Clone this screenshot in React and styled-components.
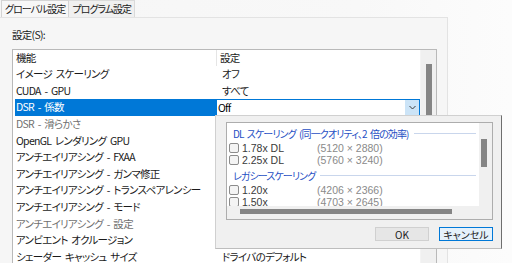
import React from "react";
import styled, { createGlobalStyle, css } from "styled-components";

const GlobalStyle = createGlobalStyle`
  html, body {
    margin: 0;
    padding: 0;
  }
  body {
    width: 512px;
    height: 263px;
    overflow: hidden;
    background: #f8f8f8;
    color: #1a1a1a;
    font-family: "Noto Sans CJK JP", "Noto Sans", sans-serif;
    font-size: 10.5px;
    letter-spacing: -0.7px;
    word-spacing: 2px;
    font-feature-settings: "palt";
  }
`;

const features = [
  { name: "イメージ スケーリング", value: "オフ" },
  { name: "CUDA - GPU", value: "すべて" },
  { name: "DSR - 係数", value: "Off", selected: true },
  { name: "DSR - 滑らかさ", disabled: true },
  { name: "OpenGL レンダリング GPU" },
  { name: "アンチエイリアシング - FXAA" },
  { name: "アンチエイリアシング - ガンマ修正" },
  { name: "アンチエイリアシング - トランスペアレンシー" },
  { name: "アンチエイリアシング - モード" },
  { name: "アンチエイリアシング - 設定", disabled: true },
  { name: "アンビエント オクルージョン" },
  { name: "シェーダー キャッシュ サイズ", value: "ドライバのデフォルト" },
];

const groups = [
  {
    title: "DL スケーリング (同一クオリティ、2 倍の効率)",
    items: [
      { label: "1.78x DL", res: "(5120 × 2880)" },
      { label: "2.25x DL", res: "(5760 × 3240)" },
    ],
  },
  {
    title: "レガシースケーリング",
    items: [
      { label: "1.20x", res: "(4206 × 2366)" },
      { label: "1.50x", res: "(4703 × 2645)" },
    ],
  },
];

export default function App() {
  return (
    <>
      <GlobalStyle />
      <Page>
        <TabStrip>
          <Tab active>グローバル設定</Tab>
          <Tab>プログラム設定</Tab>
        </TabStrip>
        <Panel>
          <Label>設定(S):</Label>
          <ListBox>
            <Table>
              <HeaderRow>
                <HeaderCell>機能</HeaderCell>
                <HeaderCell divider>設定</HeaderCell>
              </HeaderRow>
              {features.map((f) => (
                <Row key={f.name}>
                  <NameCell selected={f.selected} disabled={f.disabled}>
                    {f.name}
                  </NameCell>
                  {f.selected ? (
                    <Combo>
                      <ComboText>{f.value}</ComboText>
                      <ComboButton>
                        <svg width="7" height="5" viewBox="0 0 7 5">
                          <path
                            d="M0.5 1 L3.5 4 L6.5 1"
                            fill="none"
                            stroke="#3c3c3c"
                            strokeWidth="1"
                          />
                        </svg>
                      </ComboButton>
                    </Combo>
                  ) : (
                    <ValueCell>{f.value}</ValueCell>
                  )}
                </Row>
              ))}
            </Table>
            <VScroll>
              <VThumb />
            </VScroll>
          </ListBox>
        </Panel>
        <Popup>
          <ScaleBox>
            <ScaleList>
              {groups.map((g) => (
                <Group key={g.title}>
                  <GroupTitle>
                    <span>{g.title}</span>
                    <GroupLine />
                  </GroupTitle>
                  {g.items.map((it) => (
                    <Item key={it.label}>
                      <Check />
                      <ItemLabel>{it.label}</ItemLabel>
                      <ItemRes>{it.res}</ItemRes>
                    </Item>
                  ))}
                </Group>
              ))}
            </ScaleList>
            <InnerVScroll>
              <InnerVThumb />
            </InnerVScroll>
            <InnerHScroll>
              <InnerHThumb />
            </InnerHScroll>
            <Corner />
          </ScaleBox>
          <Buttons>
            <Button>OK</Button>
            <Button primary>キャンセル</Button>
          </Buttons>
        </Popup>
      </Page>
    </>
  );
}

const Page = styled.div`
  position: relative;
  width: 512px;
  height: 263px;
  overflow: hidden;
  background: linear-gradient(90deg, #f6f6f6 0%, #f8f8f8 70%, #fcfcfc 100%);
`;

const TabStrip = styled.div`
  display: flex;
  height: 17px;
  padding-left: 1px;
  align-items: flex-end;
`;

const Tab = styled.div`
  height: 17px;
  line-height: 16px;
  padding: 0 3px;
  box-sizing: border-box;
  border: 1px solid #dadada;
  border-bottom: none;
  background: #f0f0f0;
  color: #1a1a1a;
  font-size: 10px;
  letter-spacing: -1px;
  ${({ active }) =>
    active &&
    css`
      background: #f7f7f7;
      border-color: #d4d4d4;
    `}
  & + & {
    border-left: none;
  }
`;

const Panel = styled.div`
  width: 448px;
  height: 246px;
  box-sizing: border-box;
  border-top: 1px solid #e3e3e3;
  border-right: 1px solid #e3e3e3;
  background: #f6f6f6;
  padding: 9px 0 0 12px;
  display: flex;
  flex-direction: column;
`;

const Label = styled.div`
  height: 15px;
  line-height: 15px;
  margin-bottom: 7px;
`;

const ListBox = styled.div`
  display: flex;
  width: 425px;
  height: 230px;
  box-sizing: border-box;
  border: 1px solid #b9b9b9;
  background: #ffffff;
`;

const Table = styled.div`
  flex: 1;
  display: flex;
  flex-direction: column;
`;

const HeaderRow = styled.div`
  display: grid;
  grid-template-columns: 203px 1fr;
  height: 16px;
  flex-shrink: 0;
`;

const HeaderCell = styled.div`
  line-height: 16px;
  padding-left: 3px;
  color: #1a1a1a;
  ${({ divider }) =>
    divider &&
    css`
      border-left: 1px solid #e5e5e5;
      padding-left: 3px;
    `}
`;

const Row = styled.div`
  display: grid;
  grid-template-columns: 203px 1fr;
  height: 16.65px;
  flex-shrink: 0;
`;

const NameCell = styled.div`
  margin-left: 2px;
  padding-left: 1px;
  line-height: 16.65px;
  white-space: nowrap;
  color: ${({ disabled }) => (disabled ? "#707070" : "#1a1a1a")};
  ${({ selected }) =>
    selected &&
    css`
      background: #0078d7;
      color: #ffffff;
    `}
`;

const ValueCell = styled.div`
  padding-left: 6px;
  line-height: 16.65px;
  white-space: nowrap;
`;

const Combo = styled.div`
  display: flex;
  box-sizing: border-box;
  border: 1px solid #0078d7;
  background: #ffffff;
  height: 17px;
`;

const ComboText = styled.div`
  flex: 1;
  padding-left: 1px;
  line-height: 15px;
  color: #000;
`;

const ComboButton = styled.div`
  width: 14px;
  background: #cce4f7;
  display: flex;
  align-items: center;
  justify-content: center;
`;

const VScroll = styled.div`
  width: 15px;
  background: #f0f0f0;
  border-left: 1px solid #f4f4f4;
`;

const VThumb = styled.div`
  margin: 14px 0 0 5px;
  width: 6px;
  height: 140px;
  background: #858585;
`;

const Popup = styled.div`
  position: absolute;
  left: 215px;
  top: 115px;
  width: 287px;
  height: 134px;
  box-sizing: border-box;
  background: #f0f0f0;
  border: 1px solid #d0d0d0;
  border-right: 1px solid #6e6e6e;
  border-bottom: 1px solid #bdbdbd;
  padding: 6px 8px 0 10px;
  display: flex;
  flex-direction: column;
`;

const ScaleBox = styled.div`
  width: 267px;
  height: 98px;
  box-sizing: border-box;
  border: 1px solid #adadad;
  background: #ffffff;
  display: grid;
  grid-template-columns: 1fr 13px;
  grid-template-rows: 1fr 13px;
  overflow: hidden;
`;

const ScaleList = styled.div`
  padding: 2px 3px 0 2px;
  overflow: hidden;
`;

const Group = styled.div`
  & + & {
    margin-top: 1px;
  }
`;

const GroupTitle = styled.div`
  display: flex;
  align-items: center;
  height: 17px;
  padding-left: 4px;
  color: #1f4fc4;
  font-size: 10px;
  letter-spacing: -0.9px;
  white-space: nowrap;
`;

const GroupLine = styled.div`
  flex: 1;
  height: 1px;
  margin-left: 5px;
  background: #c9d6ec;
`;

const Item = styled.div`
  display: flex;
  align-items: center;
  height: 12px;
  white-space: nowrap;
  letter-spacing: 0;
  word-spacing: 0;
`;

const Check = styled.div`
  width: 10px;
  height: 10px;
  box-sizing: border-box;
  border: 1px solid #8c8c8c;
  border-radius: 2px;
  background: #f4f4f4;
  margin-right: 3px;
`;

const ItemLabel = styled.div`
  width: 75px;
  color: #3a3a3a;
  font-family: "Liberation Sans", "Noto Sans", sans-serif;
  font-size: 10.5px;
`;

const ItemRes = styled.div`
  color: #8a8a8a;
  font-family: "Liberation Sans", "Noto Sans", sans-serif;
  font-size: 10.5px;
`;

const InnerVScroll = styled.div`
  background: #f0f0f0;
`;

const InnerVThumb = styled.div`
  margin: 16px 0 0 2px;
  width: 6px;
  height: 28px;
  background: #858585;
`;

const InnerHScroll = styled.div`
  background: #f0f0f0;
`;

const InnerHThumb = styled.div`
  margin: 3px 0 0 13px;
  width: 212px;
  height: 5px;
  background: #858585;
`;

const Corner = styled.div`
  background: #f0f0f0;
`;

const Buttons = styled.div`
  display: flex;
  justify-content: flex-end;
  gap: 10px;
  margin-top: 7px;
  width: 267px;
`;

const Button = styled.div`
  width: 54px;
  height: 14px;
  box-sizing: border-box;
  border: 1px solid #d0d0d0;
  background: #e6e6e6;
  display: flex;
  align-items: center;
  justify-content: center;
  font-size: 10px;
  letter-spacing: 0;
  color: #1a1a1a;
  ${({ primary }) =>
    primary &&
    css`
      border-color: #0078d7;
      background: #e5f1fb;
    `}
`;
